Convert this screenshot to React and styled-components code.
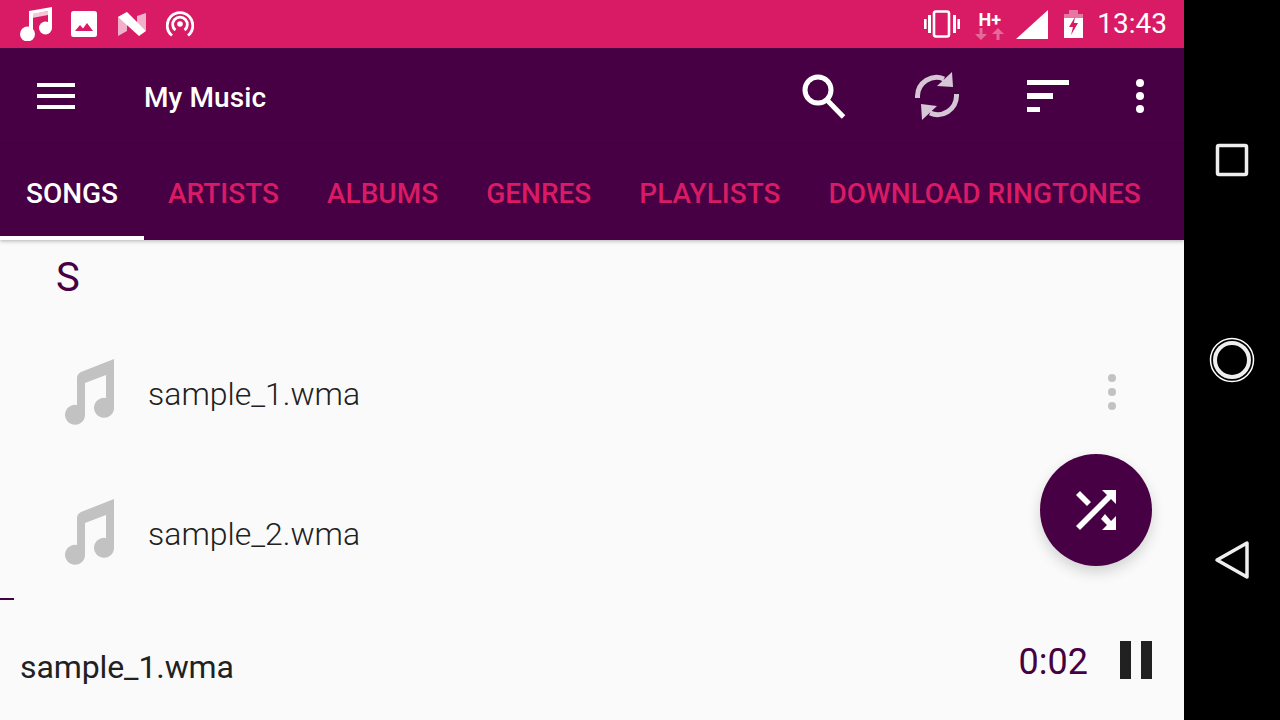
import React from "react";
import styled, { createGlobalStyle } from "styled-components";

const PURPLE = "#470044";
const PINK = "#d81b64";

const GlobalStyle = createGlobalStyle`
  html, body {
    margin: 0;
    padding: 0;
    background: #000;
  }
  body {
    font-family: Roboto, "Noto Sans", sans-serif;
  }
`;

const Screen = styled.div`
  display: flex;
  width: 1280px;
  height: 720px;
  overflow: hidden;
`;

const Main = styled.div`
  position: relative;
  display: flex;
  flex-direction: column;
  width: 1184px;
  background: #fafafa;
`;

const StatusBar = styled.div`
  display: flex;
  align-items: center;
  justify-content: space-between;
  flex: none;
  height: 48px;
  padding: 0 17px 0 20px;
  background: ${PINK};
`;

const StatusGroup = styled.div`
  display: flex;
  align-items: center;
`;

const Glyph = styled.svg`
  display: block;
  flex: none;
  margin-left: ${props => props.$gap || 0}px;
  margin-top: ${props => props.$lift ? -props.$lift : 0}px;
`;

const NetworkType = styled.div`
  display: flex;
  flex-direction: column;
  align-items: center;
  width: 29px;
  margin-left: 15px;
`;

const NetworkLabel = styled.span`
  height: 17px;
  margin-top: 3px;
  font-size: 18px;
  font-weight: 700;
  line-height: 17px;
  color: #fff;
`;

const Clock = styled.span`
  margin-left: 14px;
  font-size: 28px;
  line-height: 50px;
  color: #fff;
`;

const Toolbar = styled.div`
  display: flex;
  align-items: center;
  flex: none;
  height: 96px;
  padding-right: 40px;
  background: ${PURPLE};
`;

const Title = styled.h1`
  flex: 1;
  margin: 2px 0 0 69px;
  font-size: 28px;
  font-weight: 500;
  letter-spacing: 0.1px;
  color: #fff;
`;

const Tabs = styled.div`
  position: relative;
  z-index: 1;
  display: flex;
  flex: none;
  height: 96px;
  background: ${PURPLE};
  box-shadow: 0 1px 4px rgba(0, 0, 0, 0.3);
`;

const Tab = styled.div`
  box-sizing: border-box;
  min-width: 144px;
  height: 96px;
  padding: 0 24px;
  border-bottom: 4px solid ${props => (props.$active ? "#fff" : "transparent")};
  font-size: 28px;
  font-weight: 500;
  line-height: 100px;
  text-align: center;
  white-space: nowrap;
  color: ${props => (props.$active ? "#fff" : PINK)};
`;

const Content = styled.div`
  flex: 1;
  min-height: 0;
  overflow: hidden;
`;

const SectionHeader = styled.div`
  height: 84px;
  padding-left: 56px;
  font-size: 40px;
  line-height: 76px;
  color: ${PURPLE};
`;

const SongRow = styled.div`
  display: flex;
  align-items: center;
  flex: none;
  height: 140px;
  padding-left: 65px;
`;

const SongName = styled.span`
  flex: 1;
  margin-left: 33px;
  font-size: 32px;
  font-weight: 300;
  color: #212121;
`;

const RowMenu = styled.svg`
  display: block;
  margin: -4px 68px 0 0;
`;

const Player = styled.div`
  flex: none;
  height: 122px;
  background: #fafafa;
`;

const Progress = styled.div`
  width: ${props => props.$width}px;
  height: 2px;
  background: ${PURPLE};
`;

const PlayerRow = styled.div`
  display: flex;
  align-items: center;
  height: 120px;
  padding: 0 32px 0 20px;
`;

const PlayerName = styled.span`
  flex: 1;
  margin-top: 14px;
  font-size: 32px;
  letter-spacing: -0.1px;
  color: #212121;
`;

const Elapsed = styled.span`
  margin: 4px 32px 0 0;
  font-size: 36px;
  color: ${PURPLE};
`;

const PauseButton = styled.div`
  display: flex;
  gap: 10px;
  height: 38px;
`;

const PauseBar = styled.span`
  width: 11px;
  background: #212121;
`;

const Fab = styled.div`
  position: absolute;
  top: 454px;
  left: 1040px;
  display: flex;
  align-items: center;
  justify-content: center;
  width: 112px;
  height: 112px;
  border-radius: 50%;
  background: ${PURPLE};
  box-shadow: 0 6px 14px rgba(0, 0, 0, 0.16);
`;

const NavBar = styled.div`
  display: flex;
  flex-direction: column;
  align-items: center;
  justify-content: space-between;
  box-sizing: border-box;
  width: 96px;
  height: 720px;
  padding: 140px 0;
  background: #000;
`;

const MusicNote = () => (
  <Glyph width="33" height="34" viewBox="20 7 33 34">
    <path fill="#fff" fillOpacity="0.75" d="M32 14l16-3v4l-16 3z" />
    <path fill="#fff" d="M29 11l23-4v21h-4V11l-15 3v20h-4z" />
    <circle cx="27.500" cy="34" r="7.500" fill="#fff" />
    <circle cx="45.500" cy="28" r="6.500" fill="#fff" />
  </Glyph>
);

const ImageIcon = () => (
  <Glyph $gap={18} width="26" height="26" viewBox="0 0 26 26">
    <rect width="26" height="26" rx="2.500" fill="#fff" />
    <path fill={PINK} d="M4 20l5-6 3 3.500 4-5.500 6 8z" />
  </Glyph>
);

const NougatIcon = () => (
  <Glyph $gap={21} width="28" height="24" viewBox="0 0 28 24">
    <path fill="#fff" fillOpacity="0.65" d="M0 5l9-5v19l-9 5z" />
    <path fill="#fff" fillOpacity="0.65" d="M19 4l9-3v18l-9-8z" />
    <path fill="#fff" d="M0 5l9-5 19 19-7 5z" />
  </Glyph>
);

const CastIcon = () => (
  <Glyph $gap={20} width="28" height="28" viewBox="0 0 28 28">
    <g fill="none" stroke="#fff" strokeWidth="2.800">
      <path d="M6 25.500a12.800 12.800 0 1 1 16 0" />
      <path d="M9.500 20.200a7.300 7.300 0 1 1 9 0" />
    </g>
    <circle cx="14" cy="14" r="2.800" fill="#fff" />
  </Glyph>
);

const VibrateIcon = () => (
  <Glyph width="36" height="28" viewBox="0 0 36 28">
    <rect x="10" y="1.500" width="15" height="25" rx="2" fill="none" stroke="#fff" strokeWidth="2.600" />
    <path fill="#fff" d="M4 5h3v18H4zM29 5h3v18h-3z" />
    <path fill="#fff" d="M0 9h2.600v10H0zM33.400 9H36v10h-2.600z" />
  </Glyph>
);

const NetworkArrows = () => (
  <Glyph width="29" height="12" viewBox="0 0 29 12">
    <path fill="#fff" fillOpacity="0.35" d="M4.500 0h3v6H12l-6 6-6-6h4.500z" />
    <path fill="#fff" fillOpacity="0.35" d="M23 0l6 6h-4.500v6h-3V6H17z" />
  </Glyph>
);

const SignalIcon = () => (
  <Glyph $gap={12} width="32" height="29" viewBox="0 0 32 29">
    <path fill="#fff" d="M0 29L32 0v29z" />
  </Glyph>
);

const BatteryIcon = () => (
  <Glyph $gap={16} width="19" height="28" viewBox="0 0 19 28">
    <path fill="#fff" fillOpacity="0.4" d="M5 0h9v4h5v5H0V4h5z" />
    <path fill="#fff" d="M0 8h19v20H0z" />
    <path fill={PINK} d="M11 7L5 17h4l-2 8 7-12h-4z" />
  </Glyph>
);

const MenuIcon = () => (
  <Glyph $gap={37} width="38" height="26" viewBox="0 0 38 26">
    <path fill="#fff" d="M0 0h38v4H0zM0 11h38v4H0zM0 22h38v4H0z" />
  </Glyph>
);

const SearchIcon = () => (
  <Glyph width="44" height="46" viewBox="0 0 44 46">
    <circle cx="16" cy="17" r="13" fill="none" stroke="#fff" strokeWidth="5" />
    <path d="M25 27l16.500 17" stroke="#fff" strokeWidth="5" fill="none" />
  </Glyph>
);

const SyncIcon = () => (
  <Glyph $gap={68} width="46" height="48" viewBox="0 0 46 48" fillOpacity="0.78" strokeOpacity="0.78">
    <path d="M3.500 26V24A19 19 0 0 1 30 7" fill="none" stroke="#fff" strokeWidth="5" />
    <path fill="#fff" d="M38 0l1 15-16-1z" />
    <path d="M42.500 22V24A19 19 0 0 1 16 41" fill="none" stroke="#fff" strokeWidth="5" />
    <path fill="#fff" d="M8 48L7 32l16 2z" />
  </Glyph>
);

const SortIcon = () => (
  <Glyph $gap={67} width="42" height="32" viewBox="0 0 42 32">
    <path fill="#fff" d="M0 0h42v5H0zM0 13h26v6H0zM0 27h13v5H0z" />
  </Glyph>
);

const MoreIcon = () => (
  <Glyph $gap={67} width="8" height="34" viewBox="0 0 8 34">
    <circle cx="4" cy="4" r="4" fill="#fff" />
    <circle cx="4" cy="17" r="4" fill="#fff" />
    <circle cx="4" cy="30" r="4" fill="#fff" />
  </Glyph>
);

const SongIcon = () => (
  <Glyph $lift={3} width="50" height="67" viewBox="65 359 50 67">
    <path
      fill="#c2c2c2"
      d="M77 378q0-4 4-6l33-13v49a10 10 0 1 1-8-10v-23l-21 8v32a10 10 0 1 1-8-10z"
    />
  </Glyph>
);

const ShuffleIcon = () => (
  <svg width="40" height="40" viewBox="0 0 40 40">
    <path
      fill="#fff"
      d="M26 0H40V14L35 9 4 40 0 36 31 5zM4 1L15 12 11 16 0 5zM40 26V40H26L31 35 25 29 29 24 35 31z"
    />
  </svg>
);

const songs = ["sample_1.wma", "sample_2.wma"];
const tabs = ["SONGS", "ARTISTS", "ALBUMS", "GENRES", "PLAYLISTS", "DOWNLOAD RINGTONES"];

export default function App() {
  return (
    <Screen>
      <GlobalStyle />
      <Main>
        <StatusBar>
          <StatusGroup>
            <MusicNote />
            <ImageIcon />
            <NougatIcon />
            <CastIcon />
          </StatusGroup>
          <StatusGroup>
            <VibrateIcon />
            <NetworkType>
              <NetworkLabel>H+</NetworkLabel>
              <NetworkArrows />
            </NetworkType>
            <SignalIcon />
            <BatteryIcon />
            <Clock>13:43</Clock>
          </StatusGroup>
        </StatusBar>

        <Toolbar>
          <MenuIcon />
          <Title>My Music</Title>
          <SearchIcon />
          <SyncIcon />
          <SortIcon />
          <MoreIcon />
        </Toolbar>

        <Tabs>
          {tabs.map((tab, index) => (
            <Tab key={tab} $active={index === 0}>{tab}</Tab>
          ))}
        </Tabs>

        <Content>
          <SectionHeader>S</SectionHeader>
          {songs.map((song, index) => (
            <SongRow key={song}>
              <SongIcon />
              <SongName>{song}</SongName>
              {index === 0 && (
                <RowMenu width="8" height="36" viewBox="0 0 8 36">
                  <circle cx="4" cy="4" r="4" fill="#c2c2c2" />
                  <circle cx="4" cy="18" r="4" fill="#c2c2c2" />
                  <circle cx="4" cy="32" r="4" fill="#c2c2c2" />
                </RowMenu>
              )}
            </SongRow>
          ))}
        </Content>

        <Player>
          <Progress $width={14} />
          <PlayerRow>
            <PlayerName>sample_1.wma</PlayerName>
            <Elapsed>0:02</Elapsed>
            <PauseButton>
              <PauseBar />
              <PauseBar />
            </PauseButton>
          </PlayerRow>
        </Player>

        <Fab>
          <ShuffleIcon />
        </Fab>
      </Main>

      <NavBar>
        <svg width="36" height="40" viewBox="0 0 36 40">
          <rect x="3.500" y="5.500" width="29" height="29" rx="1.500" fill="none" stroke="#eee" strokeWidth="3.500" />
        </svg>
        <svg width="46" height="46" viewBox="0 0 46 46">
          <circle cx="23" cy="23" r="21.500" fill="none" stroke="#fff" strokeWidth="1.500" />
          <circle cx="23" cy="23" r="17" fill="none" stroke="#eee" strokeWidth="4" />
        </svg>
        <svg width="36" height="40" viewBox="0 0 36 40">
          <path d="M33 3v34L3 20z" fill="none" stroke="#eee" strokeWidth="3.500" strokeLinejoin="round" />
        </svg>
      </NavBar>
    </Screen>
  );
}
